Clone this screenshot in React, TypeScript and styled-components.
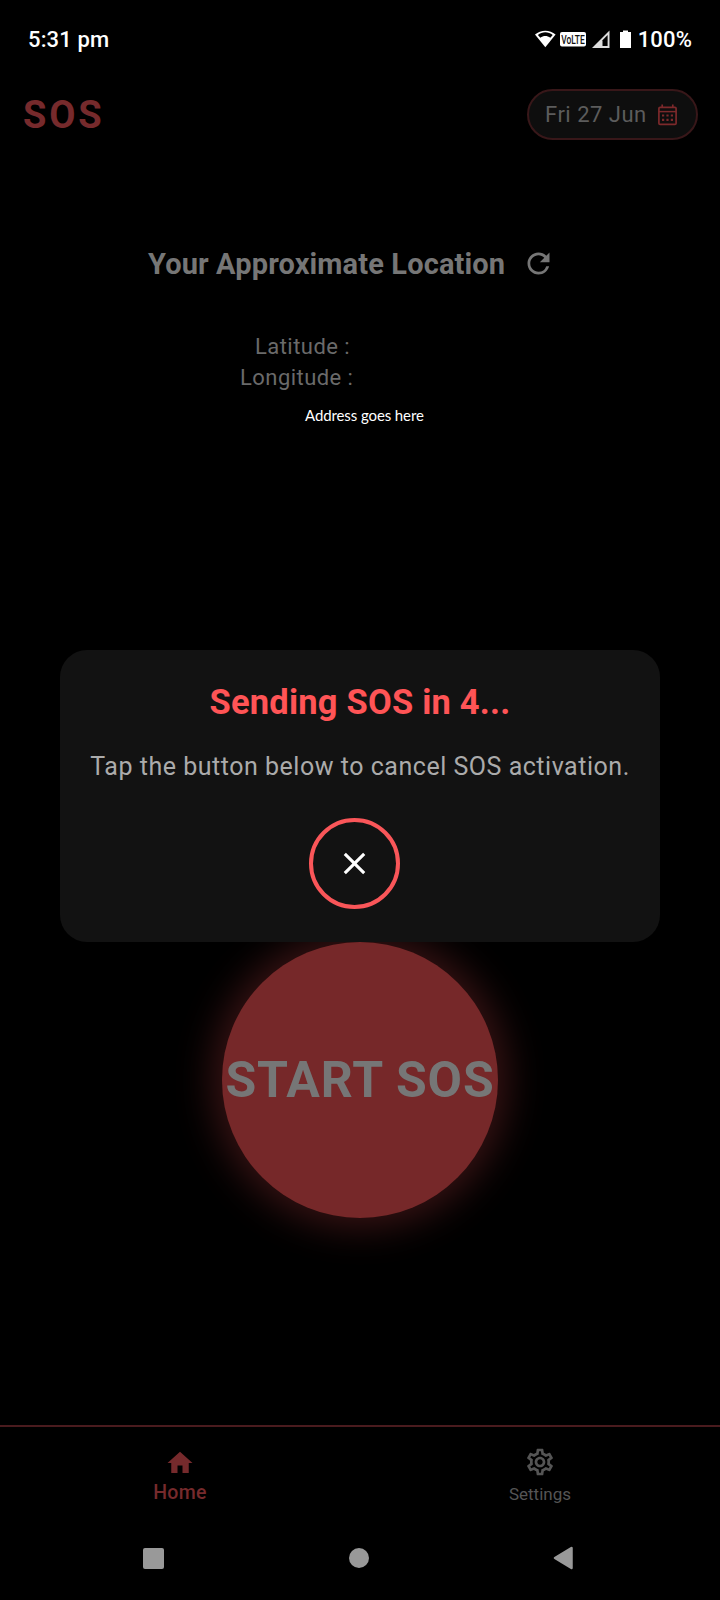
import React from "react";
import styled, { createGlobalStyle } from "styled-components";
import {
  MdClose,
  MdHome,
  MdOutlineSettings,
  MdRefresh,
} from "react-icons/md";

const Global = createGlobalStyle`
  *, *::before, *::after { box-sizing: border-box; }
  body { margin: 0; background: #000; font-family: Roboto, "Liberation Sans", sans-serif; }
  button { font-family: inherit; border: 0; padding: 0; background: none; }
  svg { display: block; flex: none; }
`;

const Screen = styled.div`
  position: relative;
  display: flex;
  flex-direction: column;
  width: 720px;
  height: 1600px;
  overflow: hidden;
  background: #000;
`;

const StatusBar = styled.div`
  display: flex;
  align-items: center;
  justify-content: space-between;
  height: 79px;
  padding: 0 28px;
  color: #fff;
  font-size: 22px;
  font-weight: 500;
  line-height: 26px;
  letter-spacing: 0.15px;
`;

const StatusIcons = styled.div`
  display: flex;
  align-items: center;
`;

const Battery = styled.span`
  margin-left: 6px;
`;

const Header = styled.header`
  display: flex;
  align-items: center;
  justify-content: space-between;
  height: 71px;
  padding: 0 22px 0 23px;
`;

const Brand = styled.h1`
  margin: 0;
  color: #762a2c;
  font-size: 38px;
  font-weight: 700;
  line-height: 44px;
  letter-spacing: 2.8px;
`;

const DateChip = styled.button`
  display: flex;
  align-items: center;
  gap: 11px;
  width: 171px;
  height: 51px;
  padding: 0 0 0 16px;
  border: 2px solid #381719;
  border-radius: 26px;
  background: #0e0e0e;
  color: #5c5c5c;
  font-size: 22px;
  line-height: 26px;
  letter-spacing: 0.5px;
  white-space: nowrap;
  svg { color: #7c292b; }
`;

const Location = styled.section`
  display: flex;
  flex-direction: column;
  height: 792px;
  padding-top: 94px;
`;

const LocationTitle = styled.div`
  display: flex;
  align-items: center;
  height: 40px;
  padding-left: 148px;
  gap: 17px;
  color: #767676;
  svg { margin-bottom: 1px; }
`;

const Heading = styled.h2`
  margin: 0;
  font-size: 29px;
  font-weight: 700;
  line-height: 40px;
  letter-spacing: 0.13px;
  white-space: nowrap;
`;

const Coordinates = styled.div`
  display: flex;
  flex-direction: column;
  margin-top: 47px;
`;

const Coordinate = styled.div<{ $indent: number }>`
  height: 31px;
  padding-left: ${(p) => p.$indent}px;
  color: #6a6a6a;
  font-size: 22px;
  line-height: 31px;
  letter-spacing: 0.45px;
`;

const Address = styled.div`
  margin: 12px 0 0 305px;
  color: #fff;
  font-family: Lato, "Liberation Sans", sans-serif;
  font-size: 15px;
  line-height: 20px;
  letter-spacing: -0.1px;
  white-space: nowrap;
`;

const StartButton = styled.button`
  flex: none;
  align-self: center;
  width: 276px;
  height: 276px;
  border-radius: 50%;
  background: #762829;
  box-shadow: 0 0 38px 9px rgba(118, 40, 41, 0.5);
  color: #767676;
  font-size: 50px;
  font-weight: 700;
  line-height: 56px;
  letter-spacing: 0.85px;
  white-space: nowrap;
`;

const TabBar = styled.nav`
  display: flex;
  height: 100px;
  margin-top: auto;
  border-top: 2px solid #4a1b1e;
`;

const Tab = styled.button<{ $active?: boolean }>`
  flex: 1;
  display: flex;
  flex-direction: column;
  align-items: center;
  padding-top: ${(p) => (p.$active ? 21 : 19)}px;
  color: ${(p) => (p.$active ? "#762a2c" : "#555")};
  font-size: ${(p) => (p.$active ? 19.5 : 17)}px;
  font-weight: ${(p) => (p.$active ? 500 : 400)};
  line-height: 24px;
  letter-spacing: ${(p) => (p.$active ? 0.3 : 0)}px;
`;

const TabLabel = styled.span<{ $offset: number }>`
  margin-top: ${(p) => p.$offset}px;
`;

const SystemBar = styled.div`
  display: flex;
  align-items: center;
  justify-content: space-between;
  height: 75px;
  padding: 0 147px 9px 143px;
`;

const Recents = styled.div`
  width: 21px;
  height: 21px;
  border-radius: 2px;
  background: #999;
`;

const HomeDot = styled.div`
  width: 20px;
  height: 20px;
  margin-left: 1px;
  border-radius: 50%;
  background: #999;
`;

const Dialog = styled.div`
  position: absolute;
  top: 650px;
  left: 60px;
  display: flex;
  flex-direction: column;
  align-items: center;
  width: 600px;
  height: 292px;
  padding-top: 31px;
  border-radius: 27px;
  background: #121212;
`;

const DialogTitle = styled.h3`
  margin: 0;
  color: #ff5456;
  font-size: 34.5px;
  font-weight: 700;
  line-height: 42px;
  letter-spacing: 0.2px;
  white-space: nowrap;
`;

const DialogText = styled.p`
  margin: 28px 0 0;
  color: #ababab;
  font-size: 25px;
  line-height: 32px;
  letter-spacing: 0.52px;
  white-space: nowrap;
`;

const CancelButton = styled.button`
  display: flex;
  align-items: center;
  justify-content: center;
  width: 91px;
  height: 91px;
  margin: 35px 11px 0 0;
  border: 4px solid #fa5659;
  border-radius: 50%;
  color: #fff;
`;

const SignalIcons = () => (
  <svg width="97" height="22" viewBox="0 0 97 22">
    <path d="M0 5.6C5.8.3 14.800.3 20.600 5.600L10.300 18.300Z" fill="#fff" />
    <path d="M2.900 5.900C7.200 2.500 13.400 2.500 17.700 5.900L15.300 8.800C12.200 6.300 8.400 6.300 5.300 8.800Z" fill="#000" />
    <rect x="25" y="3" width="26" height="14.500" rx="2" fill="#fff" />
    <text
      x="38"
      y="15"
      textAnchor="middle"
      textLength="23.500"
      lengthAdjust="spacingAndGlyphs"
      fontFamily="Roboto, sans-serif"
      fontSize="13.500"
      fontWeight="500"
      letterSpacing="0"
      fill="#111"
    >
      VoLTE
    </text>
    <path d="M57 19L74.500 1.500V19Z" fill="#ddd" />
    <path d="M67.500 11.200L72.600 6V17H67.500Z" fill="#000" />
    <path d="M85 3H88V1.500H93V3H96V19H85Z" fill="#fff" />
  </svg>
);

const CalendarIcon = () => (
  <svg width="19" height="22" viewBox="0 0 19 22" fill="none" stroke="currentColor">
    <rect x="0.900" y="3.400" width="17.200" height="17" rx="1.200" strokeWidth="1.700" />
    <path d="M1 7.600H18" strokeWidth="1.500" />
    <path d="M4.200 0.500V4M14.800 0.500V4" strokeWidth="1.700" />
    <path d="M4 11.500H6.200M8.400 11.500H10.600M12.800 11.500H15M4 15.800H6.200M8.400 15.800H10.600M12.800 15.800H15" strokeWidth="2.200" />
  </svg>
);

const BackTriangle = () => (
  <svg width="20" height="24" viewBox="0 0 20 24">
    <path d="M2 12L18.500 2V22Z" fill="#999" stroke="#999" strokeWidth="2.500" strokeLinejoin="round" />
  </svg>
);

export default function App() {
  return (
    <>
      <Global />
      <Screen>
        <StatusBar>
          <span>5:31 pm</span>
          <StatusIcons>
            <SignalIcons />
            <Battery>100%</Battery>
          </StatusIcons>
        </StatusBar>
        <Header>
          <Brand>SOS</Brand>
          <DateChip>
            <span>Fri 27 Jun</span>
            <CalendarIcon />
          </DateChip>
        </Header>
        <Location>
          <LocationTitle>
            <Heading>Your Approximate Location</Heading>
            <MdRefresh size={33} />
          </LocationTitle>
          <Coordinates>
            <Coordinate $indent={255}>Latitude :</Coordinate>
            <Coordinate $indent={240}>Longitude :</Coordinate>
          </Coordinates>
          <Address>Address goes here</Address>
        </Location>
        <StartButton>START SOS</StartButton>
        <TabBar>
          <Tab $active>
            <MdHome size={30} />
            <TabLabel $offset={3}>Home</TabLabel>
          </Tab>
          <Tab>
            <MdOutlineSettings size={32} />
            <TabLabel $offset={4}>Settings</TabLabel>
          </Tab>
        </TabBar>
        <SystemBar>
          <Recents />
          <HomeDot />
          <BackTriangle />
        </SystemBar>
        <Dialog role="dialog">
          <DialogTitle>Sending SOS in 4...</DialogTitle>
          <DialogText>Tap the button below to cancel SOS activation.</DialogText>
          <CancelButton>
            <MdClose size={37} />
          </CancelButton>
        </Dialog>
      </Screen>
    </>
  );
}
